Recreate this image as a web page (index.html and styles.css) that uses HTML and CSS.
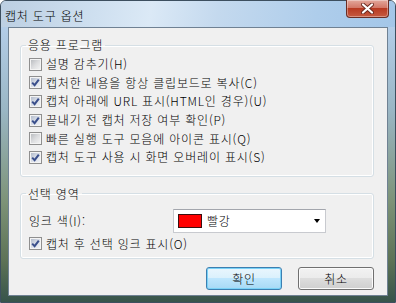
FILE: index.html
```html
<!DOCTYPE html>
<html lang="ko">
<head>
    <meta charset="UTF-8">
    <title>캡처 도구 옵션</title>
    <link rel="stylesheet" href="styles.css">
</head>
<body>

<div class="window">

    <!-- Barra de título -->
    <div class="titlebar">
        <span class="title">캡처 도구 옵션</span>
        <span class="close">
            <svg width="13" height="11" viewBox="0 0 13 11">
                <path d="M2 1.5 L11 9.5 M11 1.5 L2 9.5" stroke="#6b2a20" stroke-width="4" stroke-linecap="round"/>
                <path d="M2 1.5 L11 9.5 M11 1.5 L2 9.5" stroke="#ffffff" stroke-width="2.2" stroke-linecap="round"/>
            </svg>
        </span>
    </div>

    <div class="client">

        <!-- Grupo: aplicação -->
        <fieldset class="group group-app">
            <legend>응용 프로그램</legend>
            <label class="check"><span class="box"></span>설명 감추기(H)</label>
            <label class="check"><span class="box on"><svg viewBox="0 0 9 9"><path d="M1.2 4.6 L3.6 7.2 L7.8 1.6"/></svg></span>캡처한 내용을 항상 클립보드로 복사(C)</label>
            <label class="check"><span class="box on"><svg viewBox="0 0 9 9"><path d="M1.2 4.6 L3.6 7.2 L7.8 1.6"/></svg></span>캡처 아래에 URL 표시(HTML인 경우)(U)</label>
            <label class="check"><span class="box on"><svg viewBox="0 0 9 9"><path d="M1.2 4.6 L3.6 7.2 L7.8 1.6"/></svg></span>끝내기 전 캡처 저장 여부 확인(P)</label>
            <label class="check"><span class="box"></span>빠른 실행 도구 모음에 아이콘 표시(Q)</label>
            <label class="check"><span class="box on"><svg viewBox="0 0 9 9"><path d="M1.2 4.6 L3.6 7.2 L7.8 1.6"/></svg></span>캡처 도구 사용 시 화면 오버레이 표시(S)</label>
        </fieldset>

        <!-- Grupo: área de seleção -->
        <fieldset class="group group-sel">
            <legend>선택 영역</legend>
            <div class="ink-row">
                <span>잉크 색(I):</span>
                <div class="combo">
                    <span class="swatch"></span>
                    <span class="combo-text">빨강</span>
                    <span class="arrow"></span>
                </div>
            </div>
            <label class="check"><span class="box on"><svg viewBox="0 0 9 9"><path d="M1.2 4.6 L3.6 7.2 L7.8 1.6"/></svg></span>캡처 후 선택 잉크 표시(O)</label>
        </fieldset>

        <div class="buttons">
            <button class="btn btn-default">확인</button>
            <button class="btn">취소</button>
        </div>

    </div>
</div>

</body>
</html>
```

FILE: styles.css
```css
body {
    margin: 0;
    font-family: "Noto Sans CJK KR", sans-serif;
    font-size: 12px;
    font-weight: 300;
    letter-spacing: 0.8px;
    color: #000;
}

/* Janela com moldura de vidro */
.window {
    width: 396px;
    height: 303px;
    box-sizing: border-box;
    border: 1px solid #3d4f5f;
    border-radius: 6px 6px 0 0;
    display: flex;
    flex-direction: column;
    background: linear-gradient(to bottom, #c3d7eb 0, #b3cde8 26px, #9ab6c4 110px, #7d9378 200px, #5d7256 260px, #35524a 303px);
}

.titlebar {
    height: 26px;
    display: flex;
    justify-content: space-between;
    align-items: flex-start;
    background: linear-gradient(100deg, #bccfe2 0%, #cfe0f0 25%, #dbe9f6 38%, #c4d9ee 55%, #aecdeb 80%, #a3c6e8 100%);
    border-radius: 5px 5px 0 0;
}

.title {
    margin: 8px 0 0 4px;
    line-height: 14px;
}

.close {
    width: 41px;
    height: 17px;
    margin: -1px 6px 0 0;
    border: 1px solid #6a2d24;
    border-top: none;
    border-radius: 0 0 4px 4px;
    display: flex;
    align-items: center;
    justify-content: center;
    background: linear-gradient(to bottom, #e3a89c 0%, #d37868 45%, #b83a22 50%, #c65a40 100%);
    box-shadow: inset 0 0 0 1px rgba(255, 255, 255, 0.35);
}

/* Área cliente */
.client {
    height: 267px;
    margin: 0 7px;
    border: 1px solid #6f8193;
    background: #f0f0f0;
}

.group {
    margin: 10px 13px 0 11px;
    padding: 3px 8px 9px 8px;
    border: 1px solid #d5dfe5;
    border-radius: 3px;
    box-shadow: inset 0 0 0 1px #fff;
}

.group legend {
    margin-left: -3px;
    padding: 0 2px;
    line-height: 14px;
}

.group-sel {
    margin-top: 10px;
    padding-top: 4px;
    padding-bottom: 5px;
}

.check {
    display: flex;
    align-items: center;
    height: 18.6px;
    line-height: 14px;
}

.box {
    width: 13px;
    height: 13px;
    box-sizing: border-box;
    margin-right: 4px;
    border: 1px solid #8f8f8f;
    background: linear-gradient(135deg, #b3b6ba 0%, #dcdddf 50%, #f6f6f6 100%);
    box-shadow: inset 0 0 0 1px #f4f4f4;
    display: flex;
    align-items: center;
    justify-content: center;
}

.box.on {
    background: linear-gradient(135deg, #aab4c6 0%, #d9dee8 50%, #f4f6f9 100%);
}

.box svg {
    width: 9px;
    height: 9px;
}

.box svg path {
    fill: none;
    stroke: #3a4f8c;
    stroke-width: 2;
}

/* Linha da cor da tinta */
.ink-row {
    display: grid;
    grid-template-columns: 144px 153px;
    align-items: center;
    margin-top: 4px;
    margin-bottom: 2px;
}

.combo {
    height: 24px;
    box-sizing: border-box;
    border: 1px solid #c8cacf;
    border-top-color: #a3a6ad;
    background: #fff;
    display: flex;
    align-items: center;
}

.swatch {
    width: 24px;
    height: 14px;
    box-sizing: border-box;
    margin: 0 5px 0 4px;
    border: 1px solid #3a1010;
    background: #ff0000;
}

.combo-text {
    flex: 1;
    line-height: 14px;
}

.arrow {
    width: 0;
    height: 0;
    margin-right: 5px;
    border-left: 3.5px solid transparent;
    border-right: 3.5px solid transparent;
    border-top: 4px solid #000;
}

/* Botões */
.buttons {
    display: flex;
    justify-content: flex-end;
    gap: 16px;
    margin: 8px 13px 0 0;
}

.btn {
    width: 76px;
    height: 23px;
    padding: 0;
    font: inherit;
    letter-spacing: inherit;
    color: #000;
    border: 1px solid #707070;
    border-radius: 3px;
    background: linear-gradient(to bottom, #f2f2f2 0%, #ebebeb 50%, #dddddd 50%, #cfcfcf 100%);
    box-shadow: inset 0 0 0 1px #fbfbfb;
}

.btn-default {
    border-color: #3c7fb1;
    background: linear-gradient(to bottom, #eaf6fd 0%, #d9f0fc 50%, #bee6fd 50%, #a7d9f5 100%);
    box-shadow: inset 0 0 0 1px #7ad2f7;
}
```
